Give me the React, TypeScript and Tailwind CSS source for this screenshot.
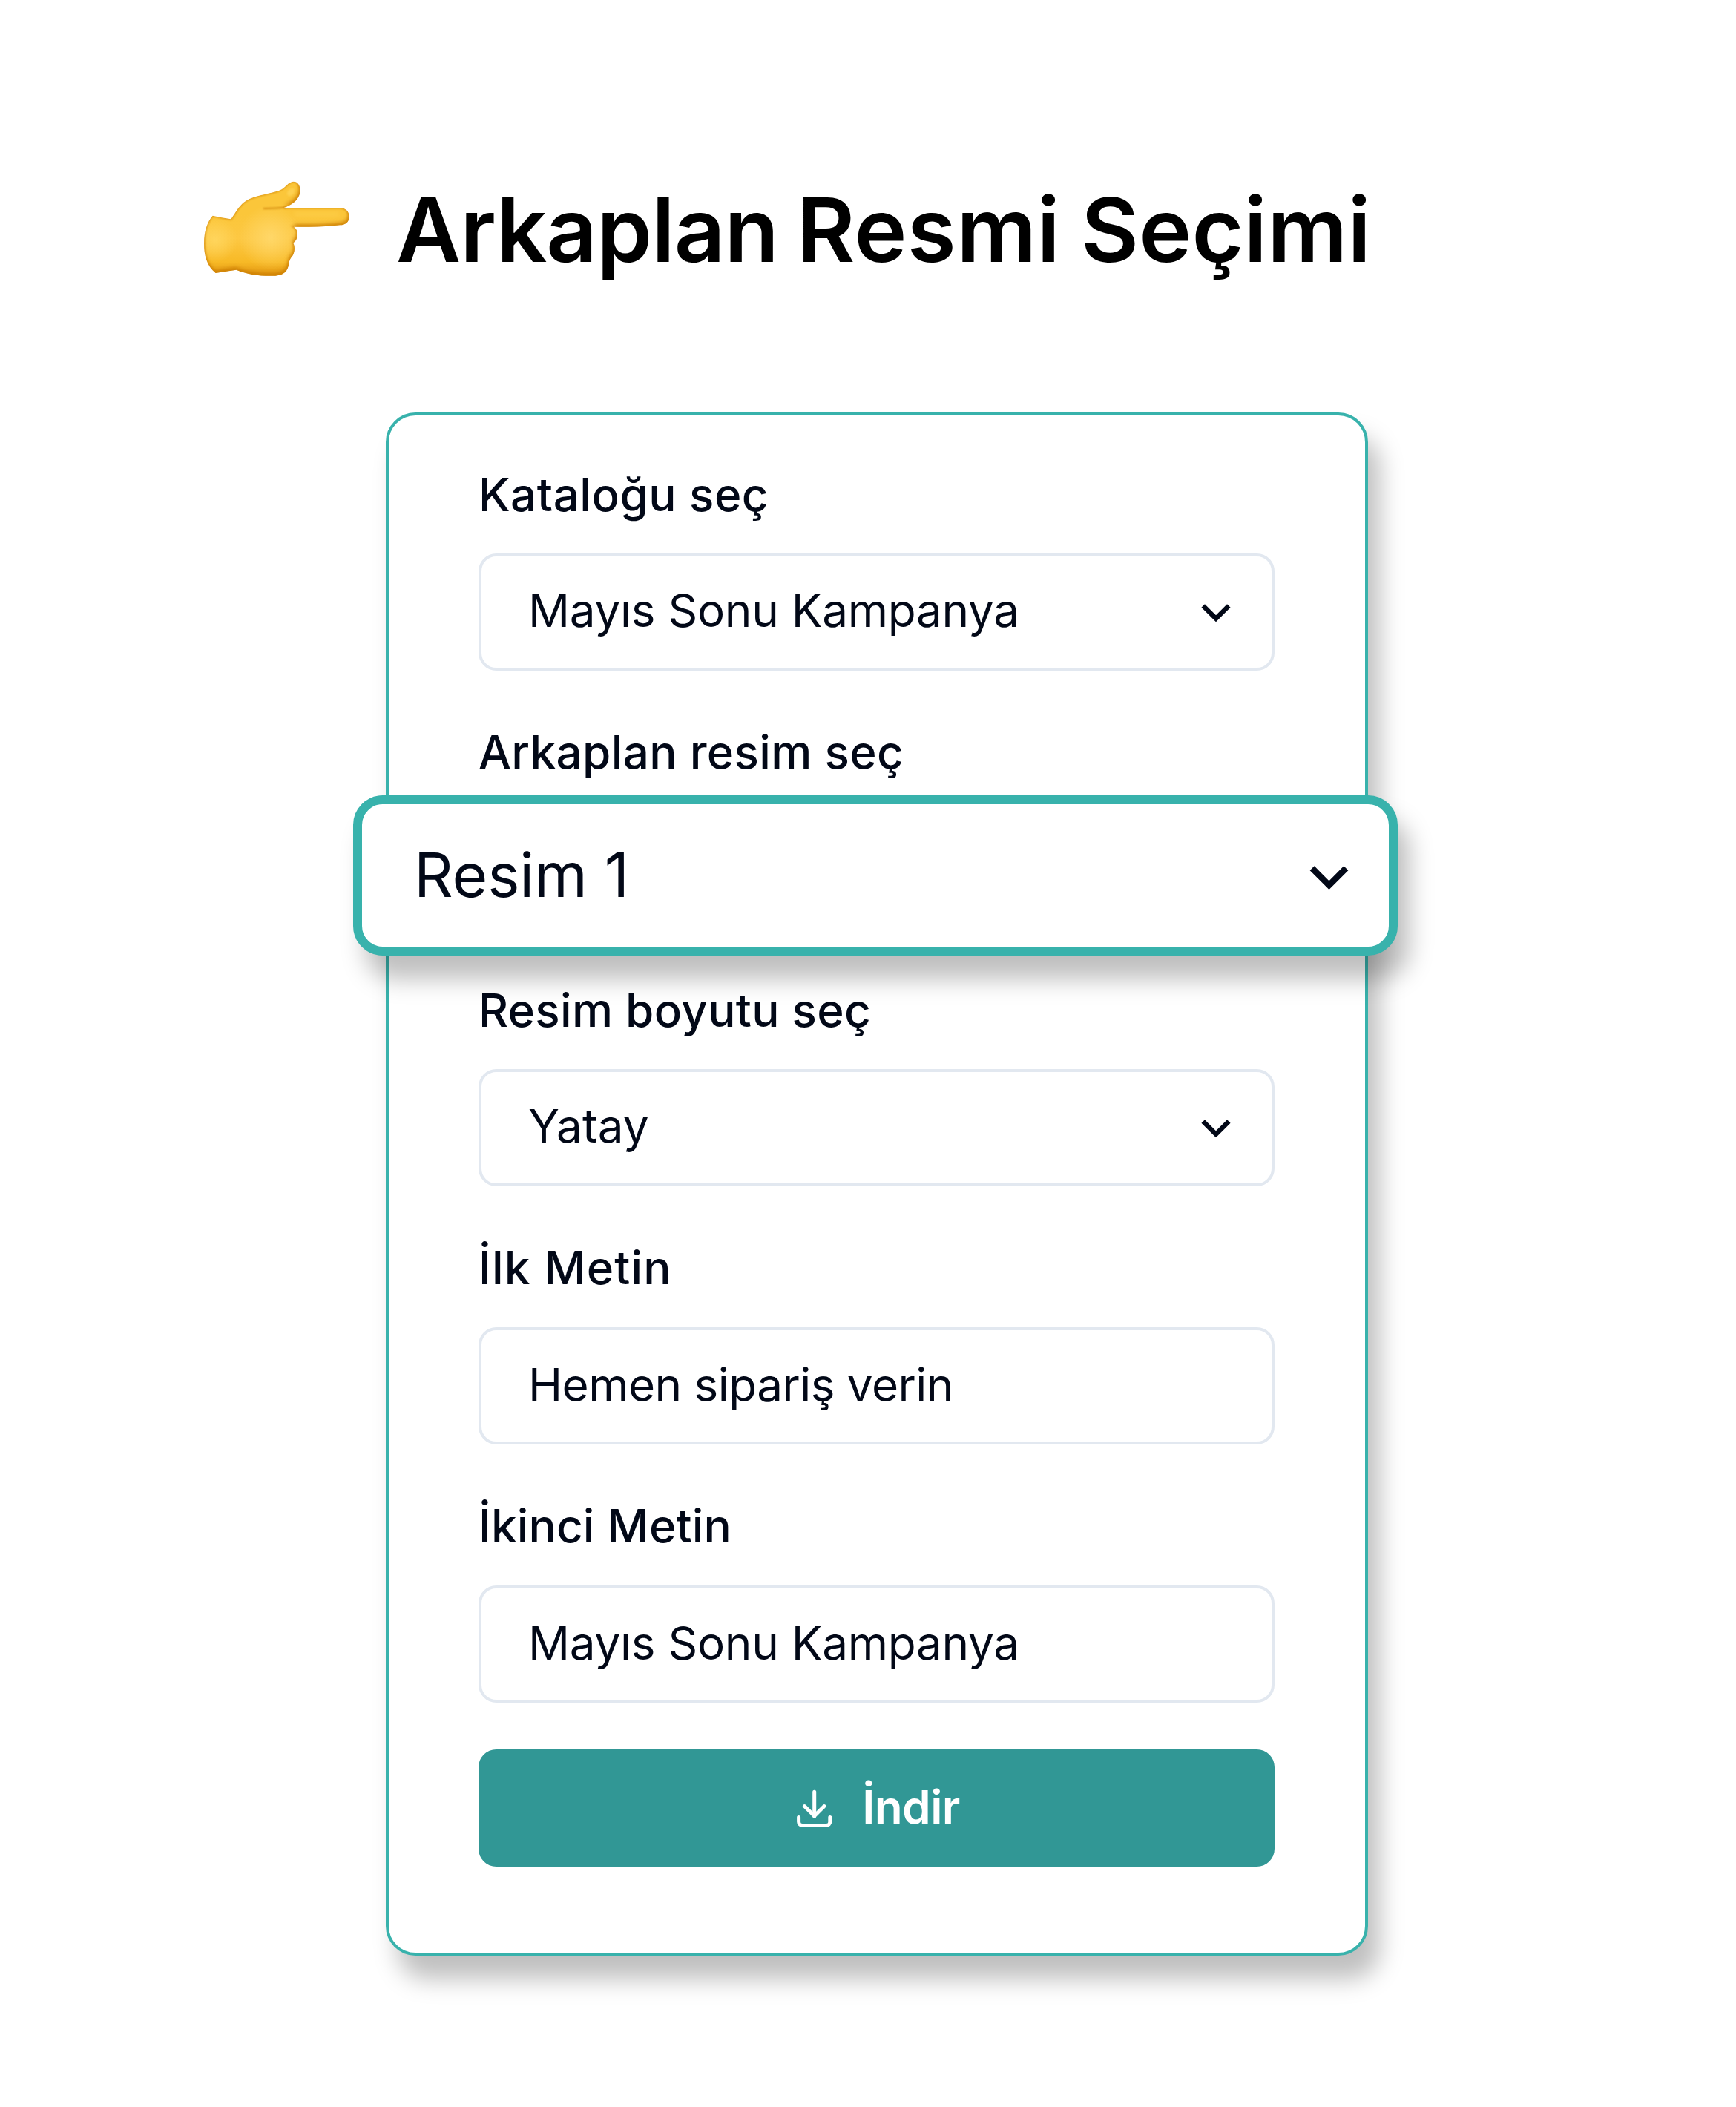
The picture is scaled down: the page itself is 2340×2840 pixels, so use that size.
import type { ReactNode } from "react";

const HAND =
  "M140 212 Q176 220 214 226 C232 203 250 158 295 142 C330 127 370 124 405 112 C437 101 440 78 465 74 C486 73 496 93 493 117 C489 150 456 171 428 180 L655 180 C679 181 692 196 692 215 C692 238 678 249 655 250 Q600 257 530 257 L468 257 C482 266 487 286 480 303 C476 315 469 319 466 323 C473 336 473 360 462 376 C450 390 451 395 448 406 C444 437 428 453 394 455 C340 458 280 450 236 431 Q195 436 152 444 C115 415 105 370 105 325 C105 275 118 237 140 212 Z";

function PointingHand() {
  return (
    <svg viewBox="0 0 780 540" className="h-[180px] w-[260px] shrink-0" aria-hidden="true">
      <defs>
        <linearGradient id="skin" x1="0" y1="74" x2="0" y2="457" gradientUnits="userSpaceOnUse">
          <stop offset="0" stopColor="#fbc63a" />
          <stop offset="0.35" stopColor="#fbc63a" />
          <stop offset="0.6" stopColor="#fdc843" />
          <stop offset="0.85" stopColor="#f7b926" />
          <stop offset="1" stopColor="#e09410" />
        </linearGradient>
        <radialGradient id="glow" cx="375" cy="300" r="130" gradientUnits="userSpaceOnUse">
          <stop offset="0" stopColor="#ffd768" />
          <stop offset="1" stopColor="#ffd768" stopOpacity="0" />
        </radialGradient>
        <radialGradient id="wristGlow" cx="150" cy="310" r="90" gradientUnits="userSpaceOnUse">
          <stop offset="0" stopColor="#ffd55c" />
          <stop offset="1" stopColor="#ffd55c" stopOpacity="0" />
        </radialGradient>
        <clipPath id="handClip">
          <path d={HAND} />
        </clipPath>
        <filter id="soft" filterUnits="userSpaceOnUse" x="-50" y="-50" width="880" height="640">
          <feGaussianBlur stdDeviation="8" />
        </filter>
        <filter id="fine" filterUnits="userSpaceOnUse" x="0" y="0" width="780" height="540">
          <feGaussianBlur stdDeviation="3.5" />
        </filter>
      </defs>
      <g clipPath="url(#handClip)">
        <path d={HAND} fill="url(#skin)" />
        <rect x="230" y="160" width="300" height="290" fill="url(#glow)" />
        <rect x="60" y="210" width="190" height="190" fill="url(#wristGlow)" />
        <path d="M470 206 H650" fill="none" stroke="#ffd050" strokeWidth="16" opacity="0.6" filter="url(#soft)" />
        <path
          d={`M-50 -50H830V590H-50Z ${HAND}`}
          fillRule="evenodd"
          fill="#c97a06"
          opacity="0.8"
          transform="translate(-3 -11)"
          filter="url(#soft)"
        />
        <path d={HAND} fill="none" stroke="#d48a0c" strokeWidth="8" opacity="0.65" filter="url(#fine)" />
        <path d="M345 183 Q395 184 440 178" fill="none" stroke="#c97a06" strokeWidth="6" opacity="0.7" filter="url(#fine)" />
        <ellipse cx="456" cy="117" rx="18" ry="12" transform="rotate(-45 456 117)" fill="#ffd55c" opacity="0.7" filter="url(#fine)" />
      </g>
    </svg>
  );
}

function Chevron({ className }: { className: string }) {
  return (
    <svg viewBox="0 0 40 25" className={className} fill="none" stroke="currentColor" strokeWidth="6.4" aria-hidden="true">
      <path d="M2.7 2.5 L20 19.8 L37.3 2.5" />
    </svg>
  );
}

function DownloadIcon() {
  return (
    <svg
      viewBox="0 0 48 52"
      className="mt-px h-[52px] w-12 shrink-0"
      fill="none"
      stroke="currentColor"
      strokeWidth="5"
      strokeLinecap="round"
      strokeLinejoin="round"
      aria-hidden="true"
    >
      <path d="M23.7 3.3V36" />
      <path d="M10.4 22.6L23.7 35.8L37 22.6" />
      <path d="M2.6 37.6V43.5A5 5 0 0 0 7.6 48.5H39.8A5 5 0 0 0 44.8 43.5V37.6" />
    </svg>
  );
}

function Field({ label, tracking, children }: { label: string; tracking: string; children: ReactNode }) {
  return (
    <div className="flex h-[347.67px] flex-col">
      <div className={`mb-[47.5px] h-16 shrink-0 whitespace-nowrap text-[62px] leading-[64px] font-medium ${tracking}`}>
        {label}
      </div>
      {children}
    </div>
  );
}

function SelectBox({ value, tracking }: { value: string; tracking: string }) {
  return (
    <div className="flex h-[158px] shrink-0 items-center justify-between rounded-3xl border-4 border-[#e2e8f0] pr-[55px] pl-[63px]">
      <span className={`pb-1 text-[62px] leading-none ${tracking}`}>{value}</span>
      <Chevron className="mt-0.5 h-[25px] w-10" />
    </div>
  );
}

function TextBox({ value, tracking }: { value: string; tracking: string }) {
  return (
    <div className="flex h-[158px] shrink-0 items-center rounded-3xl border-4 border-[#e2e8f0] pl-[63px]">
      <span className={`pb-px text-[62px] leading-none ${tracking}`}>{value}</span>
    </div>
  );
}

export default function App() {
  return (
    <div className="h-[2840px] w-[2340px] bg-white pt-[220px] font-['Inter',sans-serif] text-[#020817]">
      <header className="flex h-[180px] items-start pl-60">
        <PointingHand />
        <h1 className="mt-[30px] ml-[34px] text-[120px] leading-[120px] font-semibold whitespace-nowrap text-black">
          <span className="tracking-[-0.95px] [word-spacing:-4px]">Arkaplan </span>
          <span className="tracking-[0.4px] [word-spacing:-3px]">Resmi </span>
          <span className="tracking-[0.2px]">Seçimi</span>
        </h1>
      </header>

      <main className="mt-[156px] ml-[520px] h-[2080px] w-[1324px] rounded-[40px] border-4 border-[#38b2ac] bg-white pt-[74.5px] pr-[122px] pl-[121px] shadow-[16px_32px_32px_rgba(0,0,0,0.25)]">
        <Field label="Kataloğu seç" tracking="tracking-[0.48px]">
          <SelectBox value="Mayıs Sonu Kampanya" tracking="tracking-[-0.26px]" />
        </Field>
        <Field label="Arkaplan resim seç" tracking="tracking-[0.33px]">
          <div className="mt-[-21.67px] mr-[-166px] ml-[-169px] flex h-[216px] shrink-0 items-center justify-between rounded-[40px] border-[12px] border-[#38b2ac] bg-white pr-[54px] pl-[70px] shadow-[16px_32px_32px_rgba(0,0,0,0.25)]">
            <span className="pb-px text-[82px] leading-none tracking-[-0.1px]">Resim 1</span>
            <Chevron className="mt-1.5 h-[33px] w-[53px]" />
          </div>
        </Field>
        <Field label="Resim boyutu seç" tracking="tracking-[0.29px]">
          <SelectBox value="Yatay" tracking="tracking-[0.2px]" />
        </Field>
        <Field label="İlk Metin" tracking="tracking-[1.11px]">
          <TextBox value="Hemen sipariş verin" tracking="tracking-[-0.54px]" />
        </Field>
        <Field label="İkinci Metin" tracking="tracking-[0.12px]">
          <TextBox value="Mayıs Sonu Kampanya" tracking="tracking-[-0.26px]" />
        </Field>
        <button className="-mt-[15px] flex h-[158.5px] w-full items-center justify-center gap-[40px] rounded-3xl bg-[#319795] pl-[5px] text-white">
          <DownloadIcon />
          <span className="pb-0.5 text-[62px] leading-none font-semibold tracking-[-0.65px]">İndir</span>
        </button>
      </main>
    </div>
  );
}
